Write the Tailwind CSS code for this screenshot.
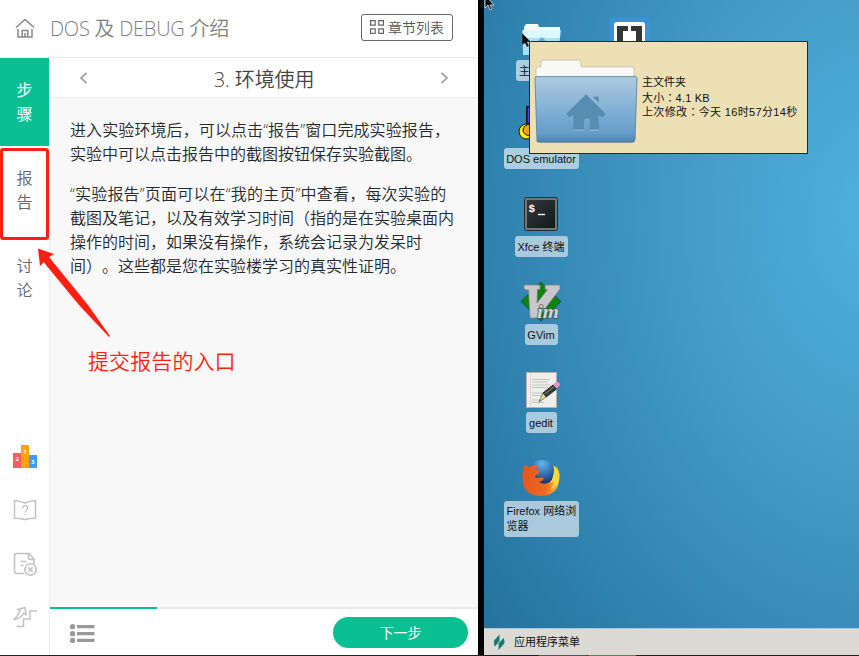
<!DOCTYPE html>
<html lang="zh-CN">
<head>
    <meta charset="UTF-8">
    <meta name="viewport" content="width=device-width, initial-scale=1.0">
    <title>DOS 及 DEBUG 介绍</title>
    <script src="https://cdn.jsdelivr.net/npm/@tailwindcss/browser@4"></script>
</head>
<body class="w-[859px] h-[656px] overflow-hidden bg-[#222]">
    <div class="relative flex h-[655px] font-['Open_Sans','Noto_Sans_CJK_SC',sans-serif] font-[350] [text-spacing-trim:space-all]">

        <!-- Panneau du cours -->
        <div class="flex flex-col w-[478px] shrink-0 bg-white">
            <header class="flex items-center h-[58px] shrink-0 border-b border-[#ebebeb] pl-[15px] pr-[25px]">
                <svg class="w-5 h-5 -mt-px" viewBox="0 0 20 20" fill="none" stroke="#888" stroke-width="1.5">
                    <path d="M1 9.500 10 1.500l9 8M3 11v8h14v-8M7.200 18.500V12.500h5.600v6M10 15v3.500"/>
                </svg>
                <h1 class="ml-[15px] text-[20px] leading-6 text-[#808080] whitespace-nowrap tracking-[-0.25px]">DOS 及 DEBUG 介绍</h1>
                <button class="ml-auto -mt-[3px] flex items-center justify-center gap-1 w-[92px] h-[27px] border border-[#666] rounded-[3px] text-[14px] text-[#555] whitespace-nowrap">
                    <svg class="w-[14px] h-[14px]" viewBox="0 0 14 14" fill="none" stroke="#666" stroke-width="1.2">
                        <path d="M.6.6h4.600v4.600H.6zM8.800.6h4.600v4.600H8.800zM.6 8.800h4.600v4.600H.6zM8.800 8.800h4.600v4.600H8.800z"/>
                    </svg>
                    章节列表
                </button>
            </header>

            <div class="flex flex-1 min-h-0">
                <!-- Barre latérale -->
                <nav class="flex flex-col items-center w-[50px] shrink-0 border-r border-[#ebebeb] text-[16px] leading-6 text-[#666]">
                    <div class="w-full h-[88px] pt-[20px] bg-[#0abf92] text-white text-center font-normal">步<br>骤</div>
                    <div class="w-full h-[92px] mt-[2px] pt-[15px] border-[3px] border-[#ff1f12] rounded-[3px] text-center">报<br>告</div>
                    <div class="w-full mt-[14px] text-center">讨<br>论</div>
                    <div class="mt-auto mb-[26px] flex flex-col items-center">
                        <svg class="w-6 h-6" viewBox="0 0 24 24">
                            <path fill="#fb5a5f" d="M0 8h8v15H0z"/>
                            <path fill="#ffa30a" d="M8 0h8v23H8z"/>
                            <path fill="#3c9ff5" d="M16 10h8v13h-8z"/>
                            <g fill="#fff" font-family="Open Sans" font-size="6" font-weight="700" text-anchor="middle">
                                <text x="4.2" y="16.2">2</text><text x="12" y="9">1</text><text x="19.6" y="19.4">3</text>
                            </g>
                        </svg>
                        <svg class="w-6 h-6 mt-[29px]" viewBox="0 0 24 24" fill="none" stroke="#c2c2c2" stroke-width="1.5">
                            <path d="M1.500 2.500Q7 3 12 5 17 3 22.500 2.500V20.300Q17 20.300 12 21.500 7 20.300 1.500 20.300z"/>
                            <path stroke-width="1.2" d="M9.300 10.200q.3-2.500 2.800-2.500 2.500.1 2.600 2.300c0 2-2.600 2-2.600 4.500M12.100 16v1.300"/>
                        </svg>
                        <svg class="w-6 h-6 mt-[30px]" viewBox="0 0 24 24" fill="none" stroke="#c2c2c2" stroke-width="1.6">
                            <path d="M11.500 21.500H4q-2.500 0-2.500-2.500V4Q1.500 1.500 4 1.500h12l5 5.500v5M15.500 2v3.500q0 2 2 2H21M7.500 9.500h6M7.500 13.500h3"/>
                            <circle cx="17.500" cy="17.500" r="5.700"/>
                            <path d="m15.300 15.300 4.400 4.400m0-4.400-4.400 4.400"/>
                        </svg>
                        <svg class="w-6 h-6 mt-[29px]" viewBox="0 0 24 24" fill="none" stroke="#c2c2c2" stroke-width="1.5">
                            <path d="M3.500 21.500H10.500v-7.500H17V6h7"/>
                            <path d="M1 14.500Q5.500 10.500 7 5.500L5 4.500l7-2 1 7-2.300-1.500Q7.500 14 1 14.500z"/>
                        </svg>
                    </div>
                </nav>

                <!-- Contenu -->
                <main class="flex flex-col flex-1 min-w-0">
                    <div class="flex items-center justify-between h-[40px] shrink-0 pl-[29px] pr-[29px] border-b border-[#ebebeb]">
                        <svg class="w-[9px] h-3 mt-px" viewBox="0 0 9 12" fill="none" stroke="#999" stroke-width="1.6"><path d="M7.500.8 2 6l5.500 5.200"/></svg>
                        <h2 class="text-[20px] leading-6 text-[#444] tracking-[-0.1px] mt-1">3. 环境使用</h2>
                        <svg class="w-[9px] h-3 mt-px" viewBox="0 0 9 12" fill="none" stroke="#999" stroke-width="1.6"><path d="M1.500.8 7 6l-5.500 5.200"/></svg>
                    </div>
                    <div class="flex-1 pl-5 pt-[20px] bg-[#f8f8f8] text-[16px] leading-6 text-[#24292e] whitespace-nowrap">
                        <p><span class="tracking-[0.1px]">进入实验环境后，可以点击“报告”窗口完成实验报告，</span><br>实验中可以点击报告中的截图按钮保存实验截图。</p>
                        <p class="mt-4"><span class="tracking-[0.2px]">“实验报告”页面可以在“我的主页”中查看，每次实验的</span><br>截图及笔记，以及有效学习时间（指的是在实验桌面内<br>操作的时间，如果没有操作，系统会记录为发呆时<br>间）。这些都是您在实验楼学习的真实性证明。</p>
                    </div>
                    <div class="h-[2px] shrink-0 bg-[#e5eaee]"><div class="w-[107px] h-full bg-[#0abf92]"></div></div>
                    <footer class="flex items-center justify-between h-[46px] shrink-0 pl-5 pr-[10px]">
                        <svg class="w-[25px] h-[19px] mt-[3px]" viewBox="0 0 25 19" fill="#999">
                            <circle cx="2.600" cy="2.700" r="2.600"/><circle cx="2.600" cy="9.700" r="2.600"/><circle cx="2.600" cy="16.400" r="2.600"/>
                            <path d="M7 1h17.500v3.300H7zM7 8h17.500v3.300H7zM7 14.800h17.500v3.300H7z"/>
                        </svg>
                        <button class="w-[135px] h-[31px] mt-px rounded-full bg-[#0abf92] text-white text-[14px] font-normal">下一步</button>
                    </footer>
                </main>
            </div>
        </div>

        <div class="w-[6px] shrink-0 bg-black"></div>

        <!-- Bureau distant -->
        <div class="flex flex-col w-[375px] shrink-0 font-['Liberation_Sans','Noto_Sans_CJK_SC',sans-serif] font-normal text-[11px] leading-[14px] text-[#111]">
            <div class="relative flex-1 overflow-hidden bg-[radial-gradient(ellipse_540px_720px_at_400px_215px,#50b1dd_0%,#449dc8_35%,#3082af_72%,#236d98_100%)]">
                <svg class="absolute left-0 -top-[6px] w-3 h-[18px]" viewBox="0 0 12 18"><path d="M1 1v13l3-3 2 5 2-1-2-4h4z" fill="#111" stroke="#ddd" stroke-width=".8"/></svg>

                <div class="absolute left-[12px] top-[20px] w-[90px] flex flex-col items-center">
                    <svg class="w-10 h-10" viewBox="0 0 40 40">
                        <path d="M3 15V7l2-3h12l1 3h21v9z" fill="#f8f8f8"/>
                        <path d="M1.500 10h38L38 35H2z" fill="#a9dff4"/>
                        <path d="M1.500 10h38l-.5 8H2z" fill="#dcf8ff"/>
                        <path d="m21 17-7 7h14z" fill="#67abd3"/>
                    </svg>
                    <span class="px-[3px] pt-[4px] pb-[3px] rounded-[3px] bg-[#adcde0]">主文件夹</span>
                </div>
                <div class="absolute left-[126px] top-[17px] w-[40px] h-[42px] pt-[5px] pl-[4px] rounded-[3px] bg-[#3793d8]">
                    <svg class="w-[31px] h-[31px]" viewBox="0 0 31 31">
                        <rect width="31" height="31" rx="3" fill="#fff"/>
                        <path d="M3 4h11v5H9v13h5v6H3zM28 4H17v5h5v13h-5v6h11z" fill="#363636"/>
                    </svg>
                </div>
                <div class="absolute left-[12px] top-[104px] w-[90px] flex flex-col items-center">
                    <svg class="w-[50px] h-11" viewBox="0 0 50 44">
                        <path d="M10.500 2.500h28v30h-28z" fill="#1717c8" stroke="#111"/>
                        <path d="M13 4v14M15 5h3M15 9h3M15 14h3" stroke="#8181f0"/>
                        <ellipse cx="10.500" cy="27.500" rx="7.500" ry="7.500" fill="#ffe80d" stroke="#111"/>
                        <ellipse cx="15" cy="26" rx="8" ry="6" fill="#f59d24" stroke="#111"/>
                        <path d="M15 22h15v10H15z" fill="#f5ae3d" stroke="#111"/>
                    </svg>
                    <span class="w-[75px] text-center pt-[4px] pb-[3px] rounded-[3px] bg-[#adcde0] whitespace-nowrap">DOS emulator</span>
                </div>
                <div class="absolute left-[12px] top-[196px] w-[90px] flex flex-col items-center">
                    <svg class="w-10 h-10" viewBox="0 0 40 40">
                        <defs><linearGradient id="term" x2="1" y2="1"><stop stop-color="#30373b"/><stop offset="1" stop-color="#15191c"/></linearGradient></defs>
                        <rect x="3.500" y="1.500" width="33" height="33" rx="2" fill="#707778" stroke="#262a2c"/>
                        <rect x="6" y="4" width="28" height="28" fill="url(#term)"/>
                        <text x="7.500" y="16" font-family="Liberation Mono" font-size="11" font-weight="700" fill="#fff">$</text>
                        <path d="M17 18.500h7" stroke="#fff" stroke-width="1.400"/>
                    </svg>
                    <span class="w-[53px] text-center pt-[4px] pb-[3px] rounded-[3px] bg-[#a9c9dd] whitespace-nowrap">Xfce 终端</span>
                </div>
                <div class="absolute left-[12px] top-[280px] w-[90px] flex flex-col items-center">
                    <svg class="w-11 h-11" viewBox="0 0 44 44">
                        <path d="m22 2 20 19.500L22 41 2 21.500z" fill="#0c8608" stroke="#0d4e65" stroke-width="1"/>
                        <path d="M5 5h16v4.500h-2.500L18 23 28.500 9.500H26V5h15v4L19 38h-8L9.500 10H7L5 9z" fill="#c9c7cb" stroke="#777d7b" stroke-width=".7"/>
                        <text x="18" y="38" font-family="Liberation Serif" font-size="19" font-style="italic" font-weight="700" fill="#d5d3d8" stroke="#3f5a48" stroke-width="1.4" paint-order="stroke" textLength="22" lengthAdjust="spacingAndGlyphs">im</text>
                    </svg>
                    <span class="w-[33px] text-center pt-[4px] pb-[3px] rounded-[3px] bg-[#a9c9dd] whitespace-nowrap">GVim</span>
                </div>
                <div class="absolute left-[12px] top-[369px] w-[90px] flex flex-col items-center">
                    <svg class="w-10 h-[43px]" viewBox="0 0 40 43">
                        <path d="M5.500 3.500h30v35h-30z" fill="#eeeeed" stroke="#b3b3b1"/>
                        <path d="M9.500 4v34" stroke="#eaaab0" stroke-width=".5"/>
                        <path d="M11 10.500h18M11 13h16M11 16h18M11 18.500h16M11 24h13M11 26.500h9M11 31h8M11 33.500h12" stroke="#bdbdbd" stroke-width=".9"/>
                        <path d="m22 24 10-8 3.500 4L25 28z" fill="#393b39" stroke="#222"/>
                        <path d="m22 24 3 4-7 5z" fill="#f1e88b" stroke="#292929" stroke-width=".6"/>
                        <path d="m32 15.500 3-2.500q4-.5 4 3L36 19.500z" fill="#dd98c2"/>
                        <path d="m24 25 9-7.500" stroke="#8b8d8a"/>
                    </svg>
                    <span class="w-[31px] text-center pt-[4px] pb-[3px] rounded-[3px] bg-[#a9c9dd]">gedit</span>
                </div>
                <div class="absolute left-[12px] top-[458px] w-[90px] flex flex-col items-center">
                    <svg class="w-10 h-[43px]" viewBox="0 0 40 43">
                        <defs>
                            <radialGradient id="globe" cx=".5" cy=".1" r=".6"><stop stop-color="#62b8eb"/><stop offset="1" stop-color="#112f76"/></radialGradient>
                            <linearGradient id="fox" x2="1" y2=".1"><stop stop-color="#e4541e"/><stop offset=".7" stop-color="#ee6a20"/><stop offset="1" stop-color="#fbbb3e"/></linearGradient>
                        </defs>
                        <circle cx="21" cy="19.500" r="17.500" fill="url(#globe)"/>
                        <path d="M4 6q2 3 4 3 4-3 9-1-2 2-2 4 4 0 4 2-4 3-5 4 0 2 2 2 3-1 7 0-1 3-5 4 4 3 9 1 6-3 7-10 2-5 0-8 5 5 4.500 13-1 17-18 18Q2 38 1.500 21 1 14 4 6z" fill="url(#fox)"/>
                        <path d="M32 7q2 5 0 11-1 5-3 7 4-1 4-3 0 5-3 9 9-4 8.500-14-1-6-6.500-10z" fill="#fcd93f"/>
                    </svg>
                    <span class="w-[75px] h-9 pl-[3px] py-[3px] rounded-[3px] bg-[#a9c9dd] leading-[15px] whitespace-nowrap">Firefox 网络浏<br>览器</span>
                </div>

                <!-- Infobulle du dossier personnel -->
                <div class="absolute left-[45px] top-[41px] w-[279px] h-[113px] flex items-center bg-[#ede0b4] border border-[#1e2b2f]">
                    <svg class="w-[104px] h-[86px] ml-[4px] mt-[9px] shrink-0" viewBox="0 0 106 88" preserveAspectRatio="none">
                        <defs><linearGradient id="folder" x2="0" y2="1"><stop stop-color="#aecae0"/><stop offset=".55" stop-color="#7eaed4"/><stop offset=".87" stop-color="#659cc8"/><stop offset="1" stop-color="#4b83b5"/></linearGradient></defs>
                        <path d="M2 20v-9q0-3 3-3h2V4q0-3 3-3h35q3 0 3 3v4h51q3 0 3 3v10z" fill="#f9f9f8" stroke="#c9c3a5"/>
                        <path d="M3 83q0 2 3 2h93q3 0 3-2" fill="none" stroke="#b1ab91" stroke-width="2"/>
                        <path d="M1 20q0-2 2-2h100q2 0 2 2l-2 62q0 3-3 3H6q-3 0-3-3z" fill="url(#folder)" stroke="#557b9c" stroke-width=".8"/>
                        <path d="M53 36 33 56l3 4 4-3v15h11V62q3-3 6 0v10h9V57l4 3 3-4z" fill="#588db2"/>
                        <path d="M66 38.500h-6l6 6z" fill="#588db2"/>
                        <path d="M40 73h11M57 73h9" stroke="#94bad8"/>
                    </svg>
                    <div class="ml-[4px] -mt-px leading-[14.5px] whitespace-nowrap">
                        <p>主文件夹</p>
                        <p class="tracking-[0.2px] h-[14.5px]">大小<span lang="zh-TW" class="font-['Noto_Sans_CJK_TC']">：</span>4.1 KB</p>
                        <p class="tracking-[0.34px] h-[14.5px]">上次修改<span lang="zh-TW" class="font-['Noto_Sans_CJK_TC']">：</span>今天 16时57分14秒</p>
                    </div>
                </div>
                <svg class="absolute left-[37px] top-[32px] w-3 h-[18px]" viewBox="0 0 12 18"><path d="M1 1v12l3-2 2 4 2-1-2-4h4z" fill="#111" stroke="#aaa" stroke-width=".4"/></svg>
            </div>

            <div class="flex items-center h-[27px] shrink-0 pl-[9px] gap-[9px] bg-[#dbdad5] border-t border-[#a6c9dc]">
                <svg class="w-3 h-4" viewBox="0 0 12 16" fill="#187a72"><path d="M6.500.5V7L2 12.500Q0 9 1.500 6zM10.500 4q2 4 0 6.500L5.500 16V9.500z"/></svg>
                <span>应用程序菜单</span>
            </div>
        </div>

        <!-- Annotation -->
        <svg class="absolute left-[36px] top-[246px] w-[76px] h-[94px]" viewBox="0 0 76 94" fill="#ff1f12">
            <path d="M2 2.500 18 8l-5 3L52 59 74 90 73 91 43 59 10 19l-2-3-4 4z"/>
        </svg>
        <p class="absolute left-[88px] top-[346px] text-[21px] leading-[30px] text-[#ff1f12] whitespace-nowrap tracking-[0.1px]">提交报告的入口</p>
    </div>
    <div class="flex h-px bg-[#222]">
        <div class="ml-[539px] w-12 bg-[#555]"></div>
        <div class="ml-px w-12 bg-[#a8602c]"></div>
    </div>
</body>
</html>
